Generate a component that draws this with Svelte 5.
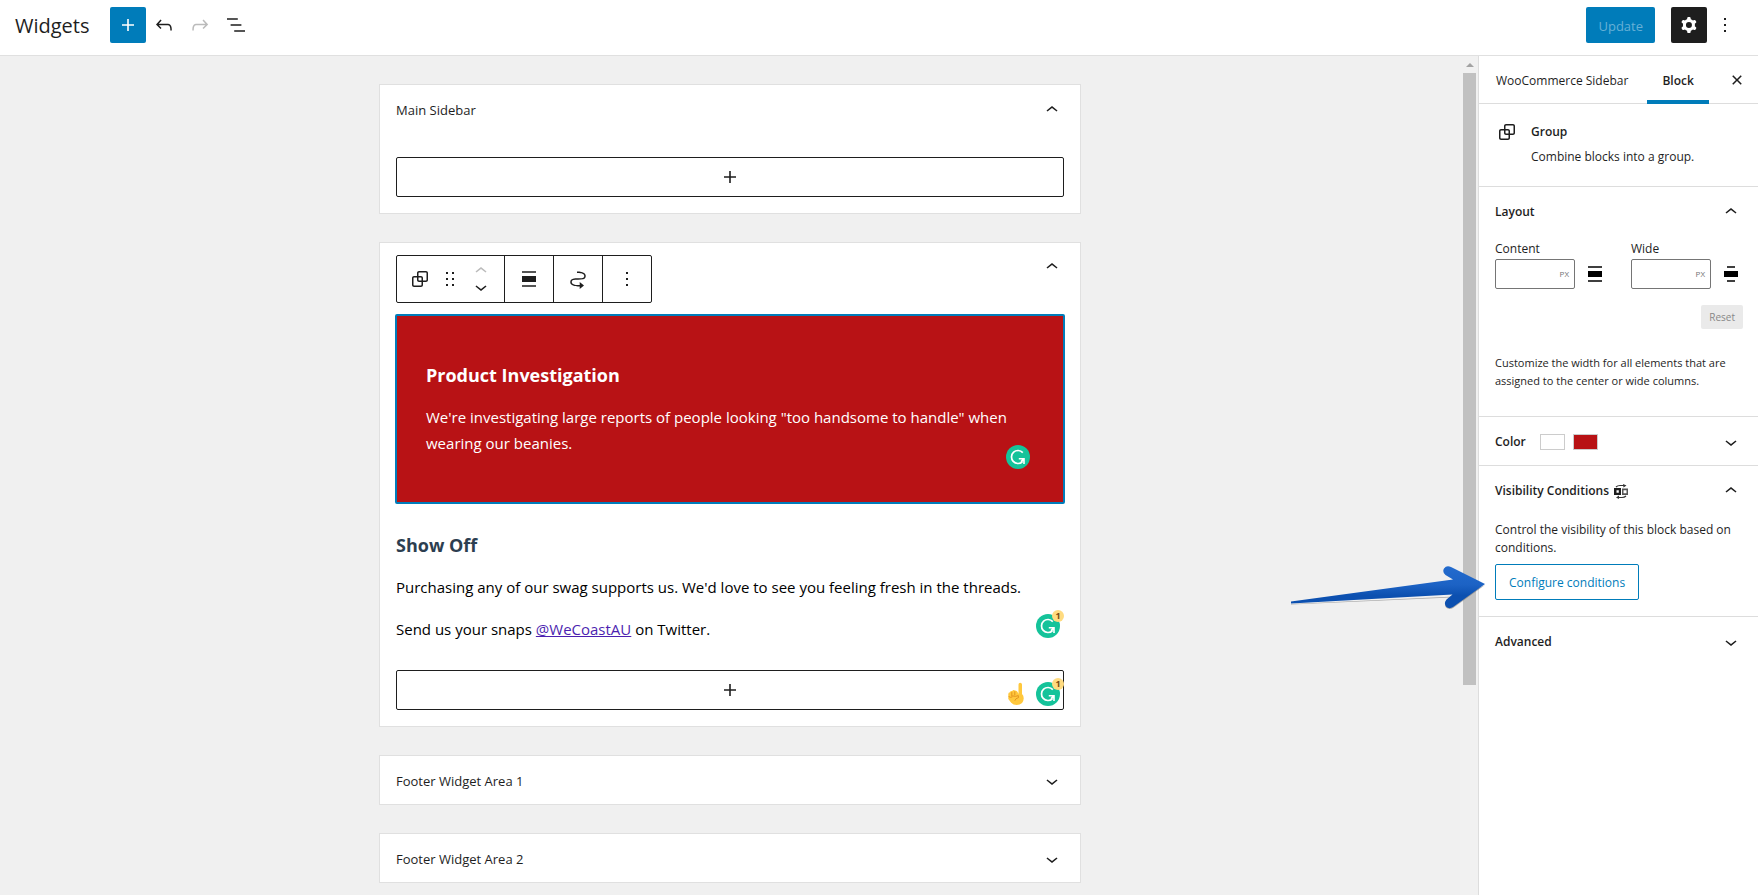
<script>
  const icons = {
    plus: 'M18 11.2h-5.2V6h-1.6v5.2H6v1.6h5.2V18h1.6v-5.2H18z',
    undo: 'M18.3 11.7c-.6-.6-1.4-.9-2.3-.9H6.7l2.9-3.3-1.1-1-4.5 5L8.5 16l1-1-2.7-2.7H16c.5 0 .9.2 1.3.5 1 1 1 3.4 1 4.5v.3h1.5v-.2c0-1.5 0-4.3-1.5-5.7z',
    redo: 'M15.6 6.5l-1.1 1 2.9 3.3H8c-.9 0-1.7.3-2.3.9-1.4 1.5-1.4 4.2-1.4 5.6v.2h1.5v-.3c0-1.1 0-3.5 1-4.5.3-.3.7-.5 1.3-.5h9.2L14.5 15l1.1 1.1 4.6-4.6-4.6-5z',
    list: 'M13.8 5.2H3v1.5h10.8V5.2zm-3.6 12v1.5H21v-1.5H10.2zm7.2-6H6.6v1.5h10.8v-1.5z',
    cog: 'M10.289 4.836A1 1 0 0111.275 4h1.306a1 1 0 01.987.836l.244 1.466c.787.26 1.503.679 2.108 1.218l1.393-.522a1 1 0 011.216.437l.653 1.13a1 1 0 01-.23 1.273l-1.148.944a6.025 6.025 0 010 2.435l1.149.946a1 1 0 01.23 1.272l-.653 1.13a1 1 0 01-1.216.437l-1.394-.522c-.605.54-1.32.958-2.108 1.218l-.244 1.466a1 1 0 01-.987.836h-1.306a1 1 0 01-.986-.836l-.244-1.466a5.995 5.995 0 01-2.108-1.218l-1.394.522a1 1 0 01-1.217-.436l-.653-1.131a1 1 0 01.23-1.272l1.149-.946a6.026 6.026 0 010-2.435l-1.148-.944a1 1 0 01-.23-1.272l.653-1.131a1 1 0 011.217-.437l1.393.522a5.994 5.994 0 012.108-1.218l.244-1.466zM14.929 12a3 3 0 11-6 0 3 3 0 016 0z',
    group: 'M18 4h-7c-1.1 0-2 .9-2 2v3H6c-1.1 0-2 .9-2 2v7c0 1.1.9 2 2 2h7c1.1 0 2-.9 2-2v-3h3c1.1 0 2-.9 2-2V6c0-1.1-.9-2-2-2zm-4.5 14c0 .3-.2.5-.5.5H6c-.3 0-.5-.2-.5-.5v-7c0-.3.2-.5.5-.5h3V13c0 1.1.9 2 2 2h2.5v3zm0-4.5H11c-.3 0-.5-.2-.5-.5v-2.5H13c.3 0 .5.2.5.5v2.5zm5-.5c0 .3-.2.5-.5.5h-3V11c0-1.1-.9-2-2-2h-2.5V6c0-.3.2-.5.5-.5h7c.3 0 .5.2.5.5v7z',
    drag: 'M8 5h2v2H8zM14 5h2v2h-2zM8 11h2v2H8zM14 11h2v2h-2zM8 17h2v2H8zM14 17h2v2h-2z',
    up: 'M6.5 12.4L12 8l5.5 4.4-.9 1.2L12 10l-4.5 3.6-1-1.2z',
    down: 'M17.5 11.6L12 16l-5.5-4.4.9-1.2L12 14l4.5-3.6 1 1.2z',
    more: 'M13 19h-2v-2h2v2zm0-6h-2v-2h2v2zm0-6h-2V5h2v2z',
    alignNone: 'M5 15h14V9H5v6zm0 4.8h14v-1.5H5v1.5zM5 4.2v1.5h14V4.2H5z',
    alignWide: 'M5 9v6h14V9H5zm11-4.8H8v1.5h8V4.2zM8 19.8h8v-1.5H8v1.5z',
    close: 'M12 13.06l3.712 3.713 1.061-1.06L13.061 12l3.712-3.712-1.06-1.06L12 10.938 8.288 7.227l-1.061 1.06L10.939 12l-3.712 3.712 1.06 1.061L12 13.061z',
    move: 'M19.75 9c0-1.257-.565-2.197-1.39-2.858-.797-.64-1.827-1.017-2.815-1.247-1.802-.42-3.703-.403-4.383-.396L11 4.5V6l.177-.001c.696-.006 2.416-.02 4.028.356.887.207 1.67.518 2.216.957.52.416.829.945.829 1.688 0 .592-.167.966-.407 1.23-.255.281-.656.508-1.236.674-1.19.34-2.82.346-4.607.346h-.077c-1.692 0-3.527 0-4.942.404-.732.209-1.424.545-1.935 1.108-.526.579-.796 1.33-.796 2.238 0 1.257.565 2.197 1.39 2.858.797.64 1.827 1.017 2.815 1.247 1.802.42 3.703.403 4.383.396L13 19.5h.714V22L18 18.5 13.714 15v3H13l-.177.001c-.696.006-2.416.02-4.028-.356-.887-.207-1.67-.518-2.216-.957-.52-.416-.829-.945-.829-1.688 0-.592.167-.966.407-1.23.255-.281.656-.508 1.237-.674 1.189-.34 2.819-.346 4.606-.346h.077c1.692 0 3.527 0 4.941-.404.732-.209 1.425-.545 1.936-1.108.526-.579.796-1.33.796-2.238z'
  };
  const footerAreas = ['Footer Widget Area 1', 'Footer Widget Area 2'];
</script>

{#snippet icon(name)}
  <svg class="icon" viewBox="0 0 24 24" width="24" height="24" aria-hidden="true">
    <path fill="currentColor" fill-rule="evenodd" d={icons[name]} />
  </svg>
{/snippet}

{#snippet checker(count)}
  <span class="checker">
    <svg viewBox="0 0 24 24" width="24" height="24" aria-hidden="true">
      <circle cx="12" cy="12" r="12" fill="#15c39a" />
      <path d="M16.800 7.600A6.500 6.500 0 1 0 16.400 16.800" fill="none" stroke="#fff" stroke-width="1.700" />
      <path d="M12.800 13h6v6h-1.600v-2.800l-1.800 1.200-1-1.400 1.600-1.400h-3.200z" fill="#fff" />
    </svg>
    {#if count}<span class="count">{count}</span>{/if}
  </span>
{/snippet}

<div class="editor">
  <header class="topbar">
    <h1>Widgets</h1>
    <div class="tools">
      <button class="square primary" aria-label="Add block">{@render icon('plus')}</button>
      <button class="square" aria-label="Undo">{@render icon('undo')}</button>
      <button class="square faded" aria-label="Redo">{@render icon('redo')}</button>
      <button class="square" aria-label="List view">{@render icon('list')}</button>
    </div>
    <div class="actions">
      <button class="update">Update</button>
      <button class="square dark" aria-label="Settings">{@render icon('cog')}</button>
      <button class="square options" aria-label="Options">{@render icon('more')}</button>
    </div>
  </header>

  <div class="body">
    <main class="canvas">
      <section class="area">
        <h2><button class="area-toggle">Main Sidebar{@render icon('up')}</button></h2>
        <div class="area-content first">
          <button class="appender" aria-label="Add block">{@render icon('plus')}</button>
        </div>
      </section>

      <section class="area">
        <div class="area-head">
          <div class="toolbar">
            <div class="segment">
              <button class="tool" aria-label="Group">{@render icon('group')}</button>
              <button class="tool drag" aria-label="Drag">{@render icon('drag')}</button>
              <div class="movers">
                <button class="faded" aria-label="Move up">{@render icon('up')}</button>
                <button aria-label="Move down">{@render icon('down')}</button>
              </div>
            </div>
            <div class="segment"><button class="tool wide" aria-label="Align">{@render icon('alignNone')}</button></div>
            <div class="segment"><button class="tool wide" aria-label="Move to widget area">{@render icon('move')}</button></div>
            <div class="segment"><button class="tool wide" aria-label="More">{@render icon('more')}</button></div>
          </div>
          <button class="collapse" aria-label="Collapse">{@render icon('up')}</button>
        </div>
        <div class="area-content">
          <div class="notice">
            <h3>Product Investigation</h3>
            <p>We're investigating large reports of people looking "too handsome to handle" when wearing our beanies.</p>
            <span class="pin in-notice">{@render checker(0)}</span>
          </div>
          <div class="copy">
            <h3>Show Off</h3>
            <p>Purchasing any of our swag supports us. We'd love to see you feeling fresh in the threads.</p>
            <p>Send us your snaps <a href="#twitter">@WeCoastAU</a> on Twitter.</p>
            <span class="pin in-copy">{@render checker(1)}</span>
          </div>
          <div class="append-row">
            <button class="appender" aria-label="Add block">{@render icon('plus')}</button>
            <span class="pin in-append">
              <svg viewBox="0 0 16 24" width="16" height="24" aria-hidden="true">
                <path fill="#ffc83d" d="M10.500 12V2.600Q10.500.8 12.200.8t1.800 1.800V12q1.800 1.500 1.700 4.500-.3 6.500-7 6.500-3.500 0-5.500-2.200L.3 17V12q0-1.600 1.700-1.800.4-1.600 2.200-1.200 1-1.400 2.800-.6 2.400-.2 3.500 3.600z" />
                <path fill="none" stroke="#e08f1c" stroke-width=".9" stroke-linecap="round" d="M3.800 10.500v3.400M6.800 9.700v3.200M1 14.800q1.600 1.200 3.200.2M4.700 14q3 1 5.600-.4l.2 2q-3 .6-3.600 2.800" />
              </svg>
              {@render checker(1)}
            </span>
          </div>
        </div>
      </section>

      {#each footerAreas as name}
        <section class="area">
          <h2><button class="area-toggle">{name}{@render icon('down')}</button></h2>
        </section>
      {/each}
    </main>

    <div class="scrollbar" aria-hidden="true">
      <svg viewBox="0 0 14 17" width="14" height="17"><path fill="#a3a3a3" d="M3 11h8L7 7z" /></svg>
      <div class="thumb"></div>
    </div>

    <aside class="sidebar">
      <div class="tabs">
        <button class="tab">WooCommerce Sidebar</button>
        <button class="tab active">Block</button>
        <button class="close" aria-label="Close settings">{@render icon('close')}</button>
      </div>

      <section class="block-card">
        {@render icon('group')}
        <div>
          <h2>Group</h2>
          <p>Combine blocks into a group.</p>
        </div>
      </section>

      <section class="panel">
        <h2><button class="panel-toggle">Layout{@render icon('up')}</button></h2>
        <div class="sizes">
          <div class="size">
            <label for="content-size">Content</label>
            <div class="size-row">
              <span class="unit-box"><input id="content-size" type="text" /><span class="unit">PX</span></span>
              {@render icon('alignNone')}
            </div>
          </div>
          <div class="size">
            <label for="wide-size">Wide</label>
            <div class="size-row">
              <span class="unit-box"><input id="wide-size" type="text" /><span class="unit">PX</span></span>
              {@render icon('alignWide')}
            </div>
          </div>
        </div>
        <div class="reset-row"><button class="reset">Reset</button></div>
        <p class="help">Customize the width for all elements that are assigned to the center or wide columns.</p>
      </section>

      <section class="panel">
        <h2>
          <button class="panel-toggle">
            <span class="label">Color <span class="swatch"></span><span class="swatch red"></span></span>
            {@render icon('down')}
          </button>
        </h2>
      </section>

      <section class="panel">
        <h2>
          <button class="panel-toggle">
            <span class="label tight">Visibility Conditions
              <svg viewBox="0 0 14 15" width="14" height="15" aria-hidden="true">
                <path fill="#1e1e1e" fill-rule="evenodd" d="M0 4h7v7H0zM2.500 6.200v2.600h2.300V6.200z" />
                <path fill="#555" fill-rule="evenodd" d="M8 4.500h6V11H8zM9.500 6.200V9.200h3V6.200z" />
                <path fill="none" stroke="#333" stroke-width="1.200" d="M2 3q1.500-1.500 4-1.500h5M12 12q-1.500 1.500-4 1.500H3" />
                <path fill="#333" d="M9 0l3.500 1.500L9.500 3.500zM5 11.500L2 13.500 5 15z" />
              </svg>
            </span>
            {@render icon('up')}
          </button>
        </h2>
        <p class="conditions">Control the visibility of this block based on conditions.</p>
        <button class="configure">Configure conditions</button>
      </section>

      <section class="panel">
        <h2><button class="panel-toggle">Advanced{@render icon('down')}</button></h2>
      </section>

      <svg class="pointer" viewBox="0 0 200 48" width="200" height="48" aria-hidden="true">
        <defs>
          <linearGradient id="pointer-fill" x1="0" y1="0" x2="0" y2="1">
            <stop offset="0" stop-color="#236bce" />
            <stop offset=".45" stop-color="#1c62c4" />
            <stop offset=".7" stop-color="#0c50b0" />
            <stop offset="1" stop-color="#0c50b0" />
          </linearGradient>
        </defs>
        <path fill="#777" d="M2 38L166 30.500l-6 5L196 19 164 42q-4 2-7-.5-2-3 .5-6l4-4L2 38.500z" opacity=".6" />
        <path fill="url(#pointer-fill)" d="M2 35.500L164 13.500l-7.500-4.500q-3.500-3-1.500-6.500 2.500-3.500 7-1.500L196 18L164 41q-4 2.500-7-.5-2.500-3.500.5-7l6-5L2 37.500z" />
      </svg>
    </aside>
  </div>
</div>

<style>
  :global(body) { margin: 0; background: #f0f0f0; }
  .editor, .editor * { box-sizing: border-box; }
  .editor {
    display: flex; flex-direction: column; height: 100vh; overflow: hidden;
    font-family: "Open Sans", "Noto Sans", sans-serif; font-size: 12px; line-height: 18px; color: #1e1e1e;
  }
  h1, h2, h3, p { margin: 0; }
  button {
    padding: 0; border: 0; background: none; font: inherit; color: inherit;
    display: flex; align-items: center; justify-content: center; cursor: pointer;
  }
  svg { display: block; flex: none; }

  .topbar { display: flex; align-items: center; height: 56px; flex: none; padding: 0 15px 6px; background: #fff; border-bottom: 1px solid #e0e0e0; }
  h1 { font-size: 20px; line-height: 28px; font-weight: 500; padding-top: 2px; }
  .tools { display: flex; margin-left: 20px; }
  .actions { display: flex; margin-left: auto; }
  .square { width: 36px; height: 36px; border-radius: 2px; }
  .primary { background: #007cba; color: #fff; }
  .faded { color: #bbb; }
  .dark { background: #1e1e1e; color: #fff; margin-left: 16px; }
  .update { height: 36px; padding: 2px 12px 0; border-radius: 2px; background: #007cba; color: #66b0d6; font-size: 13px; }

  .body { display: flex; flex: 1; min-height: 0; }
  .canvas { flex: 1; min-width: 0; overflow: hidden; padding: 28px 16px; display: flex; flex-direction: column; align-items: center; gap: 28px; }
  .area { width: 100%; max-width: 702px; flex: none; background: #fff; border: 1px solid #e0e0e0; }
  .area h2 { font-size: 13px; font-weight: 400; }
  .area-toggle { width: 100%; height: 48px; padding: 2px 16px 0; justify-content: space-between; color: #1e1e1e; }
  .area-content { padding: 0 16px 16px; }
  .area-content.first { padding-top: 24px; }
  .appender { width: 100%; height: 40px; border: 1px solid #1e1e1e; border-radius: 2px; }
  .area-head { display: flex; justify-content: space-between; padding: 12px 16px 11px; }
  .collapse { height: 24px; }

  .toolbar { display: flex; height: 48px; border: 1px solid #1e1e1e; border-radius: 2px; background: #fff; }
  .segment { display: flex; }
  .segment + .segment { border-left: 1px solid #1e1e1e; }
  .tool { width: 46px; }
  .tool.drag { width: 14px; }
  .tool.wide { width: 48px; }
  .movers { width: 47px; display: flex; flex-direction: column; align-items: center; justify-content: center; }
  .movers button { height: 16px; }

  .notice { position: relative; margin: 0 -1px; padding: 46px 29px; background: #b81215; color: #fff; border: 2px solid #007cba; border-radius: 2px; }
  h3 { font-size: 18px; line-height: 26px; font-weight: 700; }
  .notice p, .copy p { margin-top: 16px; font-size: 15px; line-height: 26px; }
  .copy { position: relative; padding: 28px 0; color: #000; }
  .copy h3 { color: #2c3e50; }
  .copy a { color: #4c1fb0; }
  .append-row { position: relative; }
  .pin { position: absolute; display: flex; gap: 12px; }
  .in-notice { right: 33px; bottom: 33px; }
  .in-copy { right: 4px; bottom: 32px; }
  .in-append { right: 4px; bottom: 4px; }
  .checker { position: relative; display: block; }
  .count {
    position: absolute; top: -4px; right: -4px; width: 12px; height: 12px; border-radius: 50%;
    background: #ffdb80; color: #7a4a10; font-size: 9px; line-height: 12px; font-weight: 700; text-align: center;
  }

  .scrollbar { width: 18px; padding: 0 2px 0 3px; background: #f1f1f1; }
  .thumb { height: 73%; background: #c1c1c1; }

  .sidebar { position: relative; width: 280px; flex: none; background: #fff; border-left: 1px solid #ddd; }
  .tabs { display: flex; height: 48px; border-bottom: 1px solid #ddd; }
  .tab { height: 48px; padding: 1px 19px 0 17px; }
  .tab.active { padding: 5px 15px 0; font-weight: 600; border-bottom: 4px solid #007cba; }
  .close { margin-left: auto; padding-right: 9px; }
  .sidebar h2 { font-size: 12px; line-height: 18px; font-weight: 600; }
  .block-card { display: flex; gap: 12px; padding: 16px; height: 82px; }
  .block-card h2 { line-height: 24px; }
  .block-card p { line-height: 26px; }
  .panel { border-top: 1px solid #ddd; padding: 0 16px; }
  .panel h2 { margin: 0 -16px; }
  .panel-toggle { width: 100%; height: 48px; padding: 2px 15px 0 16px; justify-content: space-between; }
  .label { display: flex; align-items: center; gap: 8px; }
  .label.tight { gap: 5px; }
  .swatch { width: 25px; height: 16px; border: 1px solid #ccc; margin-left: 6px; }
  .swatch.red { background: #b81215; margin-left: 0; }
  .sizes { display: flex; justify-content: space-between; padding-top: 4px; margin-right: -1px; }
  .size label { display: block; line-height: 20px; }
  .size-row { display: flex; align-items: center; gap: 8px; color: #000; }
  .unit-box { display: flex; align-items: center; width: 80px; height: 30px; border: 1px solid #757575; border-radius: 2px; padding: 0 5px 0 8px; }
  .unit-box input { flex: 1; min-width: 0; border: 0; outline: 0; padding: 0; font: inherit; background: none; }
  .unit { font-size: 8px; color: #757575; }
  .reset-row { display: flex; justify-content: flex-end; padding: 16px 0 25px; }
  .reset { height: 24px; padding: 0 8px; border-radius: 2px; background: #eaeaea; color: #888; font-size: 10px; margin-right: -1px; }
  .help { font-size: 11px; padding-bottom: 26px; }
  .conditions { padding: 7px 0; margin-right: -8px; }
  .configure { height: 36px; padding: 1px 13px 0; border: 1px solid #007cba; border-radius: 2px; color: #007cba; margin-bottom: 16px; }
  .pointer { position: absolute; top: 510px; right: 269px; }
</style>
